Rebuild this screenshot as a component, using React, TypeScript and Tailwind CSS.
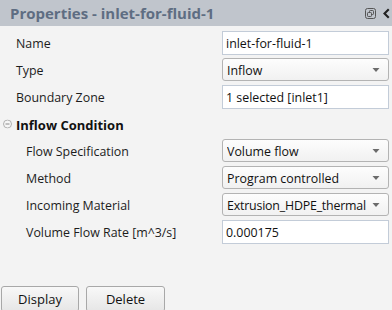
import React from "react";

const Arrow = () => (
  <svg width="8" height="5" viewBox="0 0 8 5" className="absolute right-[8px] top-1/2 -translate-y-1/2">
    <path d="M0.5 0.5 L7.5 0.5 L4 4.5 Z" fill="#6b6b6b" />
  </svg>
);

const TextBox = ({ value }: { value: string }) => (
  <div className="w-[167px] h-[24px] shrink-0 border border-[#c3ccd8] bg-white flex items-center pl-[3px] pt-[2px] text-[#111] whitespace-nowrap overflow-hidden leading-[16px]">
    {value}
  </div>
);

const Select = ({ value, tight }: { value: string; tight?: boolean }) => (
  <div className="relative w-[167px] h-[23px] shrink-0 border border-[#b3b3b3] rounded-[3px] bg-gradient-to-b from-[#fdfdfd] to-[#f1f1f1] flex items-center pl-[4px] pt-[1px] text-[#111] whitespace-nowrap">
    <span className={(tight ? "tracking-[-0.2px] " : "") + "overflow-hidden w-[142px] block leading-[17px]"}>{value}</span>
    <Arrow />
  </div>
);

const Row = ({ label, indent, children }: { label: string; indent?: boolean; children?: React.ReactNode }) => (
  <div className="h-[27px] flex items-center">
    <div className={(indent ? "pl-[26px] " : "pl-[16px] ") + "w-[222px] shrink-0 pt-[3px] leading-[16px] text-[#1c1c1c] whitespace-nowrap"}>{label}</div>
    {children}
  </div>
);

export default function App() {
  return (
    <div
      className="w-[392px] h-[310px] bg-[#f3f3f3] flex flex-col overflow-hidden text-[12.4px] leading-none"
      style={{ fontFamily: '"Segoe UI", "Open Sans", "Noto Sans", sans-serif' }}
    >
      <div className="h-[26px] shrink-0 bg-[#c0c5cc] flex items-center pl-[10px] pr-[2px]">
        <div className="text-[15px] font-bold text-[#5e6d82] whitespace-nowrap">Properties - inlet-for-fluid-1</div>
        <div className="ml-auto flex items-center gap-[7px] shrink-0">
          <svg width="11" height="11" viewBox="0 0 11 11" className="shrink-0 block">
            <rect x="0.5" y="0.5" width="10" height="10" rx="2" fill="none" stroke="#555" strokeWidth="1" />
            <rect x="4.5" y="2.5" width="4" height="4" rx="0.8" fill="none" stroke="#555" strokeWidth="1" />
            <rect x="2.5" y="4.5" width="4" height="4" rx="0.8" fill="#c0c5cc" stroke="#555" strokeWidth="1" />
          </svg>
          <svg width="7" height="11" viewBox="0 0 7 11" className="shrink-0 block">
            <polygon points="5,0.5 6.5,2 3,5.5 6.5,9 5,10.5 0,5.5" fill="#222" />
          </svg>
        </div>
      </div>
      <div className="pt-[3px] flex flex-col">
        <Row label="Name">
          <TextBox value="inlet-for-fluid-1" />
        </Row>
        <Row label="Type">
          <Select value="Inflow" />
        </Row>
        <Row label="Boundary Zone">
          <TextBox value="1 selected [inlet1]" />
        </Row>
        <div className="h-[27px] flex items-center relative">
          <svg width="9" height="9" viewBox="0 0 9 9" className="absolute left-[3px] top-1/2 -translate-y-1/2">
            <circle cx="4.5" cy="4.5" r="4" fill="#f6f6f6" stroke="#b0b0b0" strokeWidth="1" />
            <path d="M2.5 4.5 H6.5" stroke="#8a8a8a" strokeWidth="1" />
          </svg>
          <div className="pl-[16px] pt-[2px] font-bold text-[13px] leading-[16px] text-[#111]">Inflow Condition</div>
        </div>
        <Row label="Flow Specification" indent>
          <Select value="Volume flow" />
        </Row>
        <Row label="Method" indent>
          <Select value="Program controlled" />
        </Row>
        <Row label="Incoming Material" indent>
          <Select value="Extrusion_HDPE_thermal" tight />
        </Row>
        <Row label="Volume Flow Rate [m^3/s]" indent>
          <TextBox value="0.000175" />
        </Row>
      </div>
      <div className="mt-[41px] flex gap-[7px] pl-[1px]">
        <button className="w-[78px] h-[26px] border border-[#a8a8a8] rounded-[3px] bg-gradient-to-b from-[#f8f8f8] to-[#e6e6e6] text-[#111] text-[13px] leading-[16px]">
          Display
        </button>
        <button className="w-[79px] h-[26px] border border-[#a8a8a8] rounded-[3px] bg-gradient-to-b from-[#f8f8f8] to-[#e6e6e6] text-[#111] text-[13px] leading-[16px]">
          Delete
        </button>
      </div>
    </div>
  );
}
